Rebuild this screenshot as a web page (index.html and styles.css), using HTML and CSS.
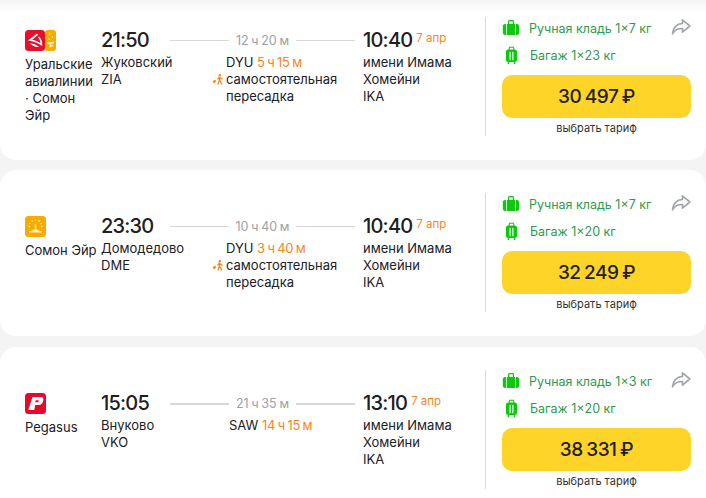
FILE: index.html
```html
<!DOCTYPE html>
<html lang="ru">
<head>
<meta charset="utf-8">
<title>Билеты</title>
<link rel="stylesheet" href="styles.css">
</head>
<body>
<svg class="defs" width="0" height="0" aria-hidden="true">
  <symbol id="hand" viewBox="0 0 18 18">
    <path d="M6 5V2.6C6 1.7 6.6 1 7.5 1h3c.9 0 1.500.7 1.500 1.600V5h-1.200V2.800c0-.3-.2-.6-.5-.6H7.700c-.3 0-.5.3-.5.6V5z" fill="#0fc70f"/>
    <path d="M3 5h12c1.300 0 2.200 1 2.200 2.200v6.600c0 1.200-.9 2.200-2.200 2.200H3c-1.300 0-2.200-1-2.200-2.200V7.200C.8 6 1.700 5 3 5z" fill="#0fc70f"/>
    <path d="M4.500 5v11M13.500 5v11" stroke="#fff" stroke-width=".8"/>
  </symbol>
  <symbol id="bag" viewBox="0 0 14 20">
    <path d="M4 4V1.800C4 1.100 4.500.6 5.200.6h3.600c.7 0 1.200.5 1.200 1.200V4H8.900V1.700H5.100V4z" fill="#0fc70f"/>
    <rect x="1" y="3.500" width="12" height="13.500" rx="2.500" fill="#0fc70f"/>
    <path d="M5.500 6.500v8M8.500 6.500v8" stroke="#fff" stroke-width="1.200" stroke-linecap="round"/>
    <rect x="2.800" y="17" width="1.800" height="2.300" rx=".8" fill="#0fc70f"/>
    <rect x="9.400" y="17" width="1.800" height="2.300" rx=".8" fill="#0fc70f"/>
  </symbol>
  <symbol id="share" viewBox="0 0 20 18">
    <path d="M11.500 1.800 18.800 8l-7.300 6.200v-3.700C7 10.300 3.600 12 1.500 15.800 1.700 10 5.600 5.800 11.500 5.400z" fill="none" stroke="#a3a5ad" stroke-width="1.700" stroke-linejoin="round"/>
  </symbol>
  <symbol id="walk" viewBox="0 0 12 11">
    <circle cx="7.800" cy="1.300" r="1.200" fill="#f5881f"/>
    <path d="M7.400 3 5.600 5.500M7.400 3 7.600 6l-1.700 4.500M7.600 6l2.400 4.500M7.500 3.300l3 2.200" stroke="#f5881f" stroke-width="1.300" fill="none"/>
    <path d="M.5 7.500 3 5.500l1.300 1.700L2 9.500z" fill="#f5881f"/>
  </symbol>
  <symbol id="somon" viewBox="0 0 21 21">
    <rect width="21" height="21" rx="3.500" fill="#f5ab00"/>
    <g fill="#fff2c4">
      <circle cx="10.500" cy="4" r=".8"/><circle cx="7" cy="5" r=".8"/><circle cx="14" cy="5" r=".8"/>
      <circle cx="4.800" cy="7.500" r=".8"/><circle cx="16.200" cy="7.500" r=".8"/><circle cx="4.300" cy="10.500" r=".8"/><circle cx="16.700" cy="10.500" r=".8"/>
      <path d="M10.500 7.500c1 .8 1 2.500.6 5h-1.200c-.4-2.500-.4-4.200.6-5z"/>
      <path d="M4 15.500c2.500-.3 4.500-1.500 6.500-3 2 1.500 4 2.700 6.500 3v1H4z"/>
    </g>
  </symbol>
</svg>

<main class="list">
  <article class="card card-first">
    <div class="airline">
      <div class="logos">
        <svg class="logo logo-ural" viewBox="0 0 20 21" aria-hidden="true">
          <rect width="20" height="21" rx="3.500" fill="#e4112b"/>
          <path d="M3 10.500 12 3.500l1 1.500-6 5c3 .3 6 1.300 8.500 3.200-.2-2.300-1-4.200-2.500-5.700l1-1c2.300 2.200 3.500 5.300 3.200 9.500C13.500 13 8.500 11.300 3 10.500z" fill="#fff"/>
          <path d="M5 13.500c3-.3 6 .8 9 3.300-.8.4-2 .4-3.500 0-2-.7-3.700-1.800-5.500-3.300z" fill="#fff"/>
        </svg>
        <svg class="logo logo-half" viewBox="0 0 11 21" aria-hidden="true">
          <rect width="11" height="21" rx="3" fill="#f5ab00"/>
          <g fill="#fff2c4"><circle cx="4.500" cy="4" r=".8"/><circle cx="7.500" cy="7" r=".8"/><circle cx="4" cy="9" r=".8"/><path d="M2 12.500l7-1v1.500l-3 1.500 3 1.500-5 1.500 1-3-3-1z"/></g>
        </svg>
      </div>
      <p class="airline-name airline-one">Уральские<br>авиалинии<br>· Сомон<br>Эйр</p>
    </div>
    <div class="point point-dep">
      <div class="time">21:50</div>
      <div class="place">Жуковский<br>ZIA</div>
    </div>
    <div class="route">
      <div class="duration"><span class="line"></span><span class="dur-text dur-long">12 ч 20 м</span><span class="line line-right"></span></div>
      <div class="stop stop-self">
        <div>DYU <span class="wait">5 ч 15 м</span></div>
        <div class="self-transfer"><svg class="walk" aria-hidden="true"><use href="#walk"/></svg>самостоятельная<br>пересадка</div>
      </div>
    </div>
    <div class="point point-arr">
      <div class="time">10:40<span class="date">7 апр</span></div>
      <div class="place">имени Имама<br>Хомейни<br>IKA</div>
    </div>
    <aside class="side side-first">
      <div class="bag-row"><svg class="ico-hand" aria-hidden="true"><use href="#hand"/></svg><span>Ручная кладь 1×7 кг</span><svg class="ico-share" aria-hidden="true"><use href="#share"/></svg></div>
      <div class="bag-row"><svg class="ico-bag" aria-hidden="true"><use href="#bag"/></svg><span>Багаж 1×23 кг</span></div>
      <button class="price">30 497 ₽</button>
      <div class="tariff">выбрать тариф</div>
    </aside>
  </article>

  <article class="card card-second">
    <div class="airline">
      <svg class="logo" aria-hidden="true"><use href="#somon"/></svg>
      <p class="airline-name airline-one">Сомон Эйр</p>
    </div>
    <div class="point point-dep">
      <div class="time">23:30</div>
      <div class="place">Домодедово<br>DME</div>
    </div>
    <div class="route">
      <div class="duration"><span class="line"></span><span class="dur-text">10 ч 40 м</span><span class="line line-right"></span></div>
      <div class="stop stop-self">
        <div>DYU <span class="wait">3 ч 40 м</span></div>
        <div class="self-transfer"><svg class="walk" aria-hidden="true"><use href="#walk"/></svg>самостоятельная<br>пересадка</div>
      </div>
    </div>
    <div class="point point-arr">
      <div class="time">10:40<span class="date">7 апр</span></div>
      <div class="place">имени Имама<br>Хомейни<br>IKA</div>
    </div>
    <aside class="side">
      <div class="bag-row"><svg class="ico-hand" aria-hidden="true"><use href="#hand"/></svg><span>Ручная кладь 1×7 кг</span><svg class="ico-share" aria-hidden="true"><use href="#share"/></svg></div>
      <div class="bag-row"><svg class="ico-bag" aria-hidden="true"><use href="#bag"/></svg><span>Багаж 1×20 кг</span></div>
      <button class="price">32 249 ₽</button>
      <div class="tariff">выбрать тариф</div>
    </aside>
  </article>

  <article class="card card-third">
    <div class="airline">
      <svg class="logo" viewBox="0 0 21 21" aria-hidden="true">
        <rect width="21" height="21" rx="3.500" fill="#e30a2c"/>
        <path d="M7.500 4h8.300c2.200 0 3 1.300 2.500 3.300l-.3 1.200c-.5 2.300-2 3.500-4.300 3.500h-3.500L9.300 17H3.300zM10.800 7.300l-.7 2h2.400c.6 0 1-.3 1.100-.9l.1-.4c.1-.5-.1-.7-.6-.7z" fill="#fff" fill-rule="evenodd"/>
      </svg>
      <p class="airline-name airline-one">Pegasus</p>
    </div>
    <div class="point point-dep">
      <div class="time">15:05</div>
      <div class="place">Внуково<br>VKO</div>
    </div>
    <div class="route">
      <div class="duration"><span class="line"></span><span class="dur-text">21 ч 35 м</span><span class="line line-right"></span></div>
      <div class="stop stop-plain">SAW <span class="wait">14 ч 15 м</span></div>
    </div>
    <div class="point point-arr">
      <div class="time">13:10<span class="date">7 апр</span></div>
      <div class="place">имени Имама<br>Хомейни<br>IKA</div>
    </div>
    <aside class="side">
      <div class="bag-row"><svg class="ico-hand" aria-hidden="true"><use href="#hand"/></svg><span>Ручная кладь 1×3 кг</span><svg class="ico-share" aria-hidden="true"><use href="#share"/></svg></div>
      <div class="bag-row"><svg class="ico-bag" aria-hidden="true"><use href="#bag"/></svg><span>Багаж 1×20 кг</span></div>
      <button class="price">38 331 ₽</button>
      <div class="tariff">выбрать тариф</div>
    </aside>
  </article>
</main>
</body>
</html>
```
FILE: styles.css
```css
* { box-sizing: border-box; }
html, body { margin: 0; padding: 0; }
body {
  width: 706px;
  height: 498px;
  overflow: hidden;
  background: #f4f4f4;
  font-family: Inter, "Liberation Sans", sans-serif;
  font-size: 13px;
  line-height: 17px;
  color: #21201f;
}
.defs { position: absolute; }
.list { display: flex; flex-direction: column; gap: 10px; }
.card {
  display: flex;
  align-items: flex-start;
  background: #fff;
  padding: 46px 0 0 25px;
}
.card-first {
  height: 160px;
  padding-top: 30px;
  border-radius: 0 0 16px 16px;
  background: linear-gradient(#f4f4f4, #fff 12px);
}
.card-second { height: 166px; border-radius: 16px; }
.card-third { height: 160px; margin-top: 1px; border-radius: 16px 16px 0 0; }

.airline { width: 76px; flex: none; }
.logos { display: flex; height: 21px; }
.logo { display: block; width: 21px; height: 21px; }
.logo-ural { width: 20px; }
.logo-half { width: 11px; margin-left: 0; }
.airline-name { margin: 5px 0 0; }
.airline-one { white-space: nowrap; }

.point { flex: none; }
.point-dep { width: 69px; white-space: nowrap; }
.point-arr { width: 122px; white-space: nowrap; }
.time {
  font-size: 20px;
  font-weight: 500;
  line-height: 21px;
  letter-spacing: -.8px;
  height: 21px;
}
.date {
  font-size: 11.500px;
  font-weight: 400;
  line-height: 14px;
  letter-spacing: 0;
  color: #f5881f;
  margin-left: 4px;
  vertical-align: 5px;
}
.place { margin-top: 3px; }

.route { width: 193px; flex: none; }
.duration { display: flex; align-items: center; width: 185px; height: 21px; }
.line { flex: 1; height: 1px; background: #d8d8dc; }
.card-third .line { height: 2px; }
.dur-text { padding: 0 7px; font-size: 12.500px; word-spacing: -.8px; color: #a0a0a6; white-space: nowrap; }
.stop { margin-top: 3px; white-space: nowrap; }
.stop-self { padding-left: 56px; }
.stop-plain { padding-left: 59px; }
.self-transfer { position: relative; }
.wait { color: #f5881f; word-spacing: -.8px; letter-spacing: -.3px; }
.walk { position: absolute; left: -14px; top: 3px; width: 12px; height: 11px; }

.side {
  flex: none;
  width: 221px;
  margin-top: -23px;
  padding: 0 15px 0 16px;
  border-left: 1px solid #d9d9d9;
  height: 119px;
}
.side-first { margin-top: -13px; }
.bag-row {
  position: relative;
  display: flex;
  align-items: center;
  height: 22px;
  margin-bottom: 5px;
  color: #2f9a4e;
  font-size: 12.500px;
}
.ico-hand { flex: none; width: 18px; height: 18px; margin-right: 9px; }
.ico-bag { flex: none; width: 13px; height: 19px; margin: 0 12px 0 3px; }
.ico-share { position: absolute; right: 0; top: 1px; width: 20px; height: 18px; }
.price {
  display: block;
  width: 189px;
  height: 43px;
  margin-top: 9px;
  border: 0;
  border-radius: 10px;
  background: #ffd428;
  font: 500 19px/43px Inter, "Liberation Sans", sans-serif;
  letter-spacing: -.5px;
  word-spacing: -1px;
  color: #21201f;
  padding: 0;
}
.tariff { margin-top: 3px; text-align: center; font-size: 11px; line-height: 15px; color: #333; }
```
